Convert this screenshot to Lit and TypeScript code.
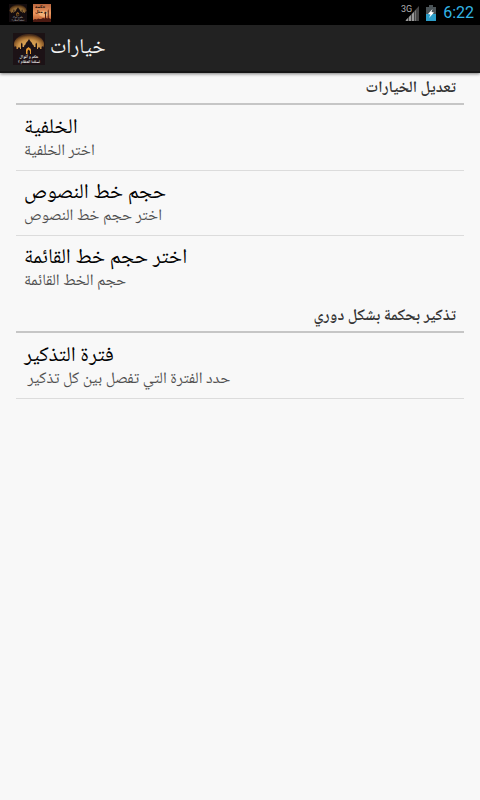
import { LitElement, html, css, svg } from "lit";
import { customElement, property } from "lit/decorators.js";

const appArt = svg`
  <defs>
    <radialGradient id="glow" cx="50%" cy="65%" r="60%">
      <stop offset="0" stop-color="#edb963"></stop>
      <stop offset="0.6" stop-color="#cb9248"></stop>
      <stop offset="0.85" stop-color="#8a5a28"></stop>
      <stop offset="1" stop-color="#4a2e1a"></stop>
    </radialGradient>
  </defs>
  <rect width="32" height="32" fill="#1c1214"></rect>
  <ellipse cx="16" cy="11" rx="15" ry="10" fill="url(#glow)"></ellipse>
  <path fill="#1c1216" d="M0 32V17h2v-3l.7-1 .7 1v2H5v-1l1-1 1 1v1h1v-5l.7-1.500.8 1.500v3H11c0-1.500.8-2.200 1.500-2.500.2-2.500 3-3 3.500-6 .5 3 3.300 3.500 3.500 6 .7.300 1.500 1 1.500 2.500h1.500v-3l.8-1.500.7 1.500v5h1v-1l1-1 1 1v1h1.600v-2l.7-1 .7 1v3h2v15z"></path>
  <path fill="#e79a33" d="M13 21v-4c0-1.500 1.500-2 2.500-3 1 1 2.500 1.500 2.500 3v4z"></path>
  <path fill="#1c1216" d="M14.500 21v-3l1-1.500 1.500 1.500v3z"></path>
`;

@customElement("app-icon")
export class AppIcon extends LitElement {
  static styles = css`
    :host { display: block; }
    svg { display: block; width: 100%; height: 100%; }
    text {
      font-family: "Noto Naskh Arabic", "Noto Sans Arabic", "DejaVu Sans", sans-serif;
      font-weight: 700;
      fill: #fff;
      text-anchor: middle;
    }
  `;
  render() {
    return html`<svg viewBox="0 0 32 32" aria-hidden="true">
      ${appArt}
      <text x="16" y="25" font-size="4">حكم و أقوال</text>
      <text x="16" y="30" font-size="4">لسلفنا العظام ؟</text>
    </svg>`;
  }
}

@customElement("status-bar")
export class StatusBar extends LitElement {
  static styles = css`
    :host {
      display: flex;
      align-items: center;
      justify-content: space-between;
      box-sizing: border-box;
      height: 25px;
      padding: 0 6px 0 9px;
      background: #000;
      font-family: Roboto, sans-serif;
    }
    .group { display: flex; align-items: center; }
    .notes { gap: 6px; }
    .notes > * { width: 18px; height: 18px; }
    .small { opacity: 0.7; }
    .signal { width: 19px; height: 18px; margin-right: 6px; }
    .battery { width: 10px; height: 16px; margin-right: 7px; }
    .clock { color: #33b5e5; font-size: 16px; line-height: 24px; }
    svg { display: block; }
    .net { font: 400 9px Roboto, sans-serif; fill: #b0b0b0; }
    .note-text { font: 700 4px "DejaVu Sans", sans-serif; fill: #1c0c08; }
  `;
  render() {
    return html`
      <div class="group notes">
        <app-icon class="small"></app-icon>
        <svg viewBox="0 0 18 18" aria-hidden="true">
          <defs>
            <linearGradient id="dusk" x1="0" y1="0" x2="0" y2="1">
              <stop offset="0" stop-color="#b9663f"></stop>
              <stop offset="0.5" stop-color="#ee9a61"></stop>
              <stop offset="1" stop-color="#b45428"></stop>
            </linearGradient>
          </defs>
          <rect width="18" height="18" fill="url(#dusk)"></rect>
          <ellipse cx="11" cy="10" rx="5" ry="3" fill="#f7bd83" opacity="0.7"></ellipse>
          <path fill="#4b1a12" d="M0 18v-2l2-1 2 .5 1-1 1.500.5H8l2-1 2 .6V10l.5-1.500L13 10v4l1.700.5V7l.5-2 .5 2v7l2.300 1v3z"></path>
          <text class="note-text" x="2" y="4">حكمة</text>
          <text class="note-text" x="2" y="9">و مثل</text>
        </svg>
      </div>
      <div class="group">
        <svg class="signal" viewBox="0 0 19 18" aria-hidden="true">
          <text class="net" x="0" y="8">3G</text>
          <path fill="#444" d="M18 2v15H4z"></path>
          <path fill="#999" d="M5 16l2-2v3H5zM8 13l2-2v6H8zM11 10l2-2v9h-2z"></path>
          <path fill="#777" d="M14 7l1-1v11h-1z"></path>
        </svg>
        <svg class="battery" viewBox="0 0 10 16" aria-hidden="true">
          <path fill="#4a5357" d="M3 0h4v2h3v7H0V2h3z"></path>
          <path fill="#2d9dc8" d="M0 9h10v7H0z"></path>
          <path fill="#fff" d="M6.500 4L2 9l2.500.5L3 13l5-5.500L5.500 7z"></path>
        </svg>
        <time class="clock">6:22</time>
      </div>
    `;
  }
}

interface Option { title: string; summary: string; }

@customElement("option-group")
export class OptionGroup extends LitElement {
  @property() heading = "";
  @property({ attribute: false }) options: Option[] = [];

  static styles = css`
    :host { display: block; padding: 0 16px; }
    h2 {
      margin: 0;
      padding: 2px 8px 0;
      border-bottom: 2px solid #c6c6c6;
      color: #333;
      font-size: 16px;
      font-weight: 600;
      line-height: 28px;
      text-align: right;
    }
    ul { margin: 0; padding: 1px 0 0; list-style: none; }
    li { border-bottom: 1px solid #dcdcdc; }
    :host(:not([last])) li:last-child { border-bottom-color: transparent; }
    button {
      display: flex;
      flex-direction: column;
      justify-content: center;
      align-items: flex-start;
      box-sizing: border-box;
      width: 100%;
      min-height: 64px;
      padding: 4px 8px 0;
      border: 0;
      background: none;
      font: inherit;
      text-align: left;
    }
    .title { color: #000; font-size: 21px; line-height: 24px; }
    .summary { color: #505050; font-size: 16px; line-height: 22px; white-space: pre; }
  `;
  render() {
    return html`
      <h2 dir="rtl">${this.heading}</h2>
      <ul>
        ${this.options.map((o) => html`<li><button type="button">
          <span class="title" dir="rtl">${o.title}</span>
          <span class="summary" dir="rtl">${o.summary}</span>
        </button></li>`)}
      </ul>
    `;
  }
}

@customElement("app-root")
export class AppRoot extends LitElement {
  static styles = css`
    :host {
      display: block;
      min-height: 100vh;
      background: #f8f8f8;
      font-family: "Noto Naskh Arabic", "Noto Sans Arabic", "Droid Arabic Naskh", "DejaVu Sans", sans-serif;
    }
    header {
      display: flex;
      align-items: center;
      gap: 5px;
      box-sizing: border-box;
      height: 48px;
      padding: 2px 13px 0;
      background: #222;
      border-bottom: 2px solid #161616;
      box-shadow: 0 1px 3px rgba(0, 0, 0, 0.5);
    }
    app-icon.logo { width: 32px; height: 32px; }
    h1 { margin: 0; color: #f3f3f3; font-size: 21px; font-weight: 400; line-height: 32px; }
  `;
  render() {
    return html`
      <status-bar></status-bar>
      <header>
        <app-icon class="logo"></app-icon>
        <h1 dir="rtl">خيارات</h1>
      </header>
      <main>
        <option-group heading="تعديل الخيارات" .options=${[
          { title: "الخلفية", summary: "اختر الخلفية" },
          { title: "حجم خط النصوص", summary: "اختر حجم خط النصوص" },
          { title: "اختر حجم خط القائمة", summary: "حجم الخط القائمة" },
        ]}></option-group>
        <option-group last heading="تذكير بحكمة بشكل دوري" .options=${[
          { title: "فترة التذكير", summary: "حدد الفترة التي تفصل بين كل تذكير " },
        ]}></option-group>
      </main>
    `;
  }
}
